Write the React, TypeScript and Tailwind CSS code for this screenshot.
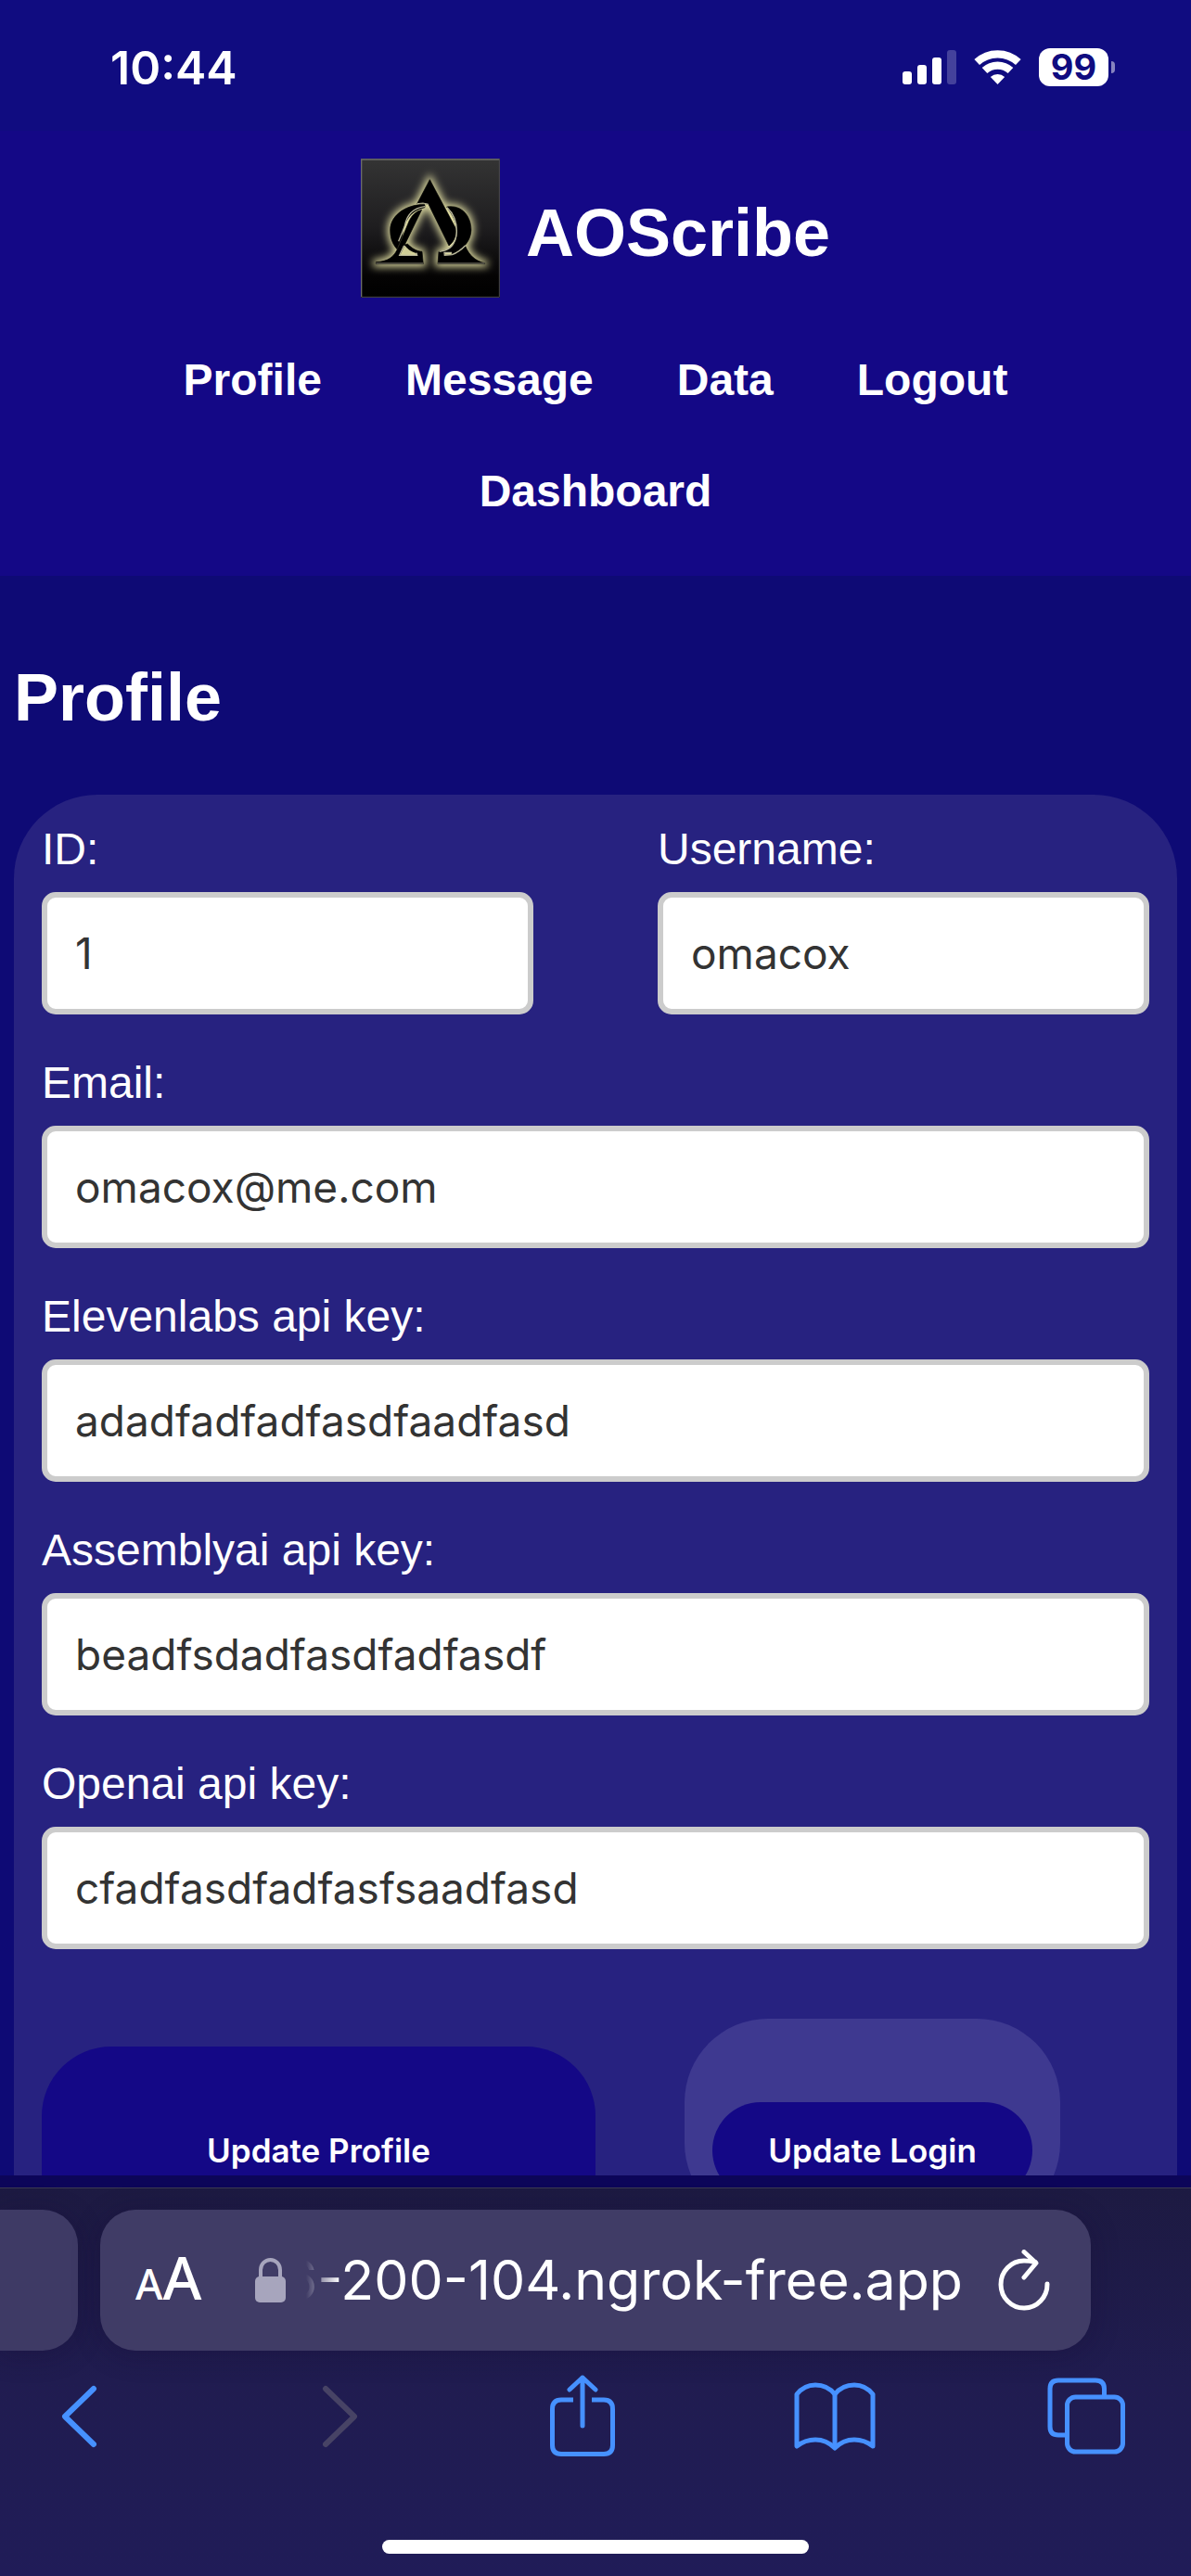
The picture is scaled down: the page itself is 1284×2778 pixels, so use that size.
import React from "react";

const navItems = ["Profile", "Message", "Data", "Logout", "Dashboard"];

function StatusBar() {
  return (
    <div className="flex h-[141px] shrink-0 items-start justify-between bg-[#100c80] pt-[44px] pr-[82px] pl-[119px] font-['Inter',sans-serif] text-white">
      <span className="text-[50px] leading-[58px] font-semibold">10:44</span>
      <div className="flex items-center gap-[19px] pt-2">
        <svg className="h-[37px] w-[58px]" viewBox="0 0 58 37" fill="currentColor" aria-hidden="true">
          <rect x="0" y="23" width="10" height="14" rx="3" />
          <rect x="16" y="16" width="10" height="21" rx="3" />
          <rect x="32" y="8" width="10" height="29" rx="3" />
          <rect x="48" y="0" width="10" height="37" rx="3" opacity="0.22" />
        </svg>
        <svg className="h-[37px] w-[51px]" viewBox="330 72 154 112" fill="none" stroke="currentColor" strokeWidth="25" aria-hidden="true">
          <path d="M339.5 111.6 A99 99 0 0 1 474.5 111.6" />
          <path d="M364.7 138.7 A62 62 0 0 1 449.3 138.7" />
          <path d="M407 184 L383.8 160 A34 34 0 0 1 430.2 160 Z" fill="currentColor" stroke="none" />
        </svg>
        <div className="flex items-center gap-[3px]">
          <span className="flex h-[41px] w-[75px] items-center justify-center rounded-[12px] bg-white text-[38px] leading-[41px] font-bold text-[#100c80]">
            99
          </span>
          <span className="h-[13px] w-[4px] rounded-r-full bg-[#8784bf]" />
        </div>
      </div>
    </div>
  );
}

function Logo() {
  return (
    <svg className="size-[150px]" viewBox="12 12 450 450" role="img" aria-label="AOScribe logo">
      <defs>
        <linearGradient id="tile" x1="0" y1="0" x2="0" y2="1">
          <stop offset="0" stopColor="#343434" />
          <stop offset="0.5" stopColor="#1e1d1f" />
          <stop offset="0.85" stopColor="#040303" />
          <stop offset="1" stopColor="#000000" />
        </linearGradient>
        <filter id="glow" x="-30%" y="-30%" width="160%" height="160%">
          <feGaussianBlur stdDeviation="12" />
        </filter>
        <g id="mark">
          <path d="M235 80 L319 238 Q324 272 297 294 L231 160 Q214 153 194 158 Z" />
          <path d="M290 168 C340 160 369 200 369 243 C368 278 343 305 318 316 L305 325 L308 317 L282 315 L283 325 L307 324 Q330 316 350 295 C362 325 385 345 413 350 L413 353 L261 353 L264 313 L284 309 C308 304 323 280 323 250 C323 215 306 192 290 168 Z" />
          <path d="M219 161 C168 158 108 190 107 243 C107 275 118 292 129 305 L146 263 C150 215 172 180 219 170 Z" />
          <path d="M209 178 L137 326 L194 326 L192 317 C172 312 160 301 154 291 L163 288 C178 303 192 311 210 313 L214 353 L61 353 L61 347 C100 345 121 330 134 297 L169 212 Q182 185 209 178 Z" />
        </g>
      </defs>
      <rect x="12" y="12" width="450" height="450" fill="url(#tile)" />
      <path d="M14 460 V15 H460" fill="none" stroke="#6b6b6b" strokeWidth="4" />
      <path d="M14 460 H460 V15" fill="none" stroke="#4a4a4c" strokeWidth="3" />
      <use href="#mark" filter="url(#glow)" fill="#dedba0" stroke="#dedba0" strokeWidth="18" />
      <use href="#mark" fill="#000000" stroke="#000000" strokeWidth="2" />
      <path d="M219 167 C182 172 160 196 154 230 L134 280" fill="none" stroke="#b9b79a" strokeWidth="4" />
      <path d="M291 170 C312 190 323 215 322 250 C321 280 306 303 284 309 L266 313" fill="none" stroke="#b9b79a" strokeWidth="4" />
      <path d="M350 293 Q330 314 307 323 L283 325 L282 316 L306 316" fill="none" stroke="#b9b79a" strokeWidth="4" />
      <path d="M194 158 Q214 153 231 160" fill="none" stroke="#b9b79a" strokeWidth="3" />
      <path d="M152 293 L137 325 H194 L192 317" fill="none" stroke="#b9b79a" strokeWidth="4" />
      <path d="M61 351 H214 M261 351 H413" fill="none" stroke="#8d8b78" strokeWidth="3" />
    </svg>
  );
}

function Header() {
  return (
    <header className="shrink-0 bg-[#140886] px-[30px] pt-[30px] pb-[31px]">
      <div className="flex items-end justify-center gap-[28px]">
        <Logo />
        <h1 className="text-[72px] leading-[140px] font-bold">AOScribe</h1>
      </div>
      <nav className="mt-[29px] flex flex-wrap justify-center">
        {navItems.map((item) => (
          <a key={item} href="#" className="px-[45px] text-[48px] leading-[120px] font-bold">
            {item}
          </a>
        ))}
      </nav>
    </header>
  );
}

function Field({ id, label, value, wide }: { id: string; label: string; value: string; wide?: boolean }) {
  return (
    <div className={wide ? "col-span-2" : ""}>
      <label htmlFor={id} className="mb-[18px] block text-[48px] leading-[57px]">
        {label}
      </label>
      <input
        id={id}
        type="text"
        defaultValue={value}
        className="block h-[132px] w-full rounded-[15px] border-6 border-[#cccccc] bg-white px-[30px] font-['Inter',sans-serif] text-[46px] text-[#333333]"
      />
    </div>
  );
}

function ProfileForm() {
  return (
    <form className="rounded-[90px] bg-[#272280] p-[30px]" onSubmit={(e) => e.preventDefault()}>
      <div className="grid grid-cols-2 gap-x-[134px] gap-y-[45px]">
        <Field id="user-id" label="ID:" value="1" />
        <Field id="username" label="Username:" value="omacox" />
        <Field id="email" label="Email:" value="omacox@me.com" wide />
        <Field id="elevenlabs" label="Elevenlabs api key:" value="adadfadfadfasdfaadfasd" wide />
        <Field id="assemblyai" label="Assemblyai api key:" value="beadfsdadfasdfadfasdf" wide />
        <Field id="openai" label="Openai api key:" value="cfadfasdfadfasfsaadfasd" wide />
      </div>
      <div className="mt-[75px] grid grid-cols-2 items-end font-['Inter',sans-serif] text-[35px] font-semibold">
        <button type="submit" className="h-[224px] rounded-[75px] bg-[#140886]">
          Update Profile
        </button>
        <div className="mb-[30px] justify-self-center rounded-[90px] bg-[#3e3990] px-[30px] pt-[90px] pb-[30px]">
          <button type="button" className="block h-[104px] rounded-full bg-[#140886] px-[60px]">
            Update Login
          </button>
        </div>
      </div>
    </form>
  );
}

function AddressBar() {
  return (
    <div className="flex h-[152px] gap-[24px]">
      <div className="w-[84px] shrink-0 rounded-r-[38px] bg-[#3e3a65] shadow-[0_4px_30px_rgba(20,10,50,0.3)]" />
      <div className="mr-[108px] flex min-w-0 flex-1 items-center rounded-[38px] bg-[#403c66] pr-[44px] pl-[38px] font-['Inter',sans-serif] text-white shadow-[0_4px_30px_rgba(20,10,50,0.3)]">
        <button type="button" aria-label="Page settings" className="flex items-baseline font-['Noto_Sans',sans-serif] leading-[80px] font-medium">
          <span className="text-[45px]">A</span>
          <span className="text-[64px]">A</span>
        </button>
        <svg className="ml-auto h-[48px] w-[33px] shrink-0" viewBox="0 0 33 48" fill="none" aria-hidden="true">
          <rect x="0" y="20" width="33" height="28" rx="5" fill="#a7a5bd" />
          <path d="M6 22 V13 A10.5 11 0 0 1 27 13 V22" stroke="#a7a5bd" strokeWidth="4" />
        </svg>
        <div className="ml-[22px] flex w-[708px] justify-end overflow-hidden text-[59px] leading-[80px] whitespace-nowrap [mask-image:linear-gradient(to_right,transparent,black_36px)]">
          6-200-104.ngrok-free.app
        </div>
        <button type="button" aria-label="Reload" className="ml-[38px] shrink-0">
          <svg className="h-[67px] w-[56px]" viewBox="0 0 56 67" fill="none" stroke="currentColor" strokeWidth="5" strokeLinecap="round" strokeLinejoin="round">
            <path d="M53 37 A25 25.5 0 1 1 28 12 Q34 12 40 13.5" />
            <path d="M28 2.5 L41 14.5 L28 30" />
          </svg>
        </button>
      </div>
    </div>
  );
}

function Toolbar() {
  return (
    <div className="mt-[25px] flex h-[91px] items-center justify-between pr-[69px] pl-[41px] text-[#4691ff]">
      <button type="button" aria-label="Back" className="flex w-[88px] justify-center">
        <svg className="h-[68px] w-[40px]" viewBox="0 0 40 68" fill="none" stroke="currentColor" strokeWidth="6" strokeLinecap="round" strokeLinejoin="round">
          <path d="M36 4 L5 34 L36 64" />
        </svg>
      </button>
      <button type="button" aria-label="Forward" disabled className="flex w-[88px] justify-center pl-[20px] text-[#474365]">
        <svg className="h-[68px] w-[40px]" viewBox="0 0 40 68" fill="none" stroke="currentColor" strokeWidth="6" strokeLinecap="round" strokeLinejoin="round">
          <path d="M4 4 L35 34 L4 64" />
        </svg>
      </button>
      <button type="button" aria-label="Share" className="flex w-[88px] justify-center">
        <svg className="h-[90px] w-[70px]" viewBox="0 0 70 90" fill="none" stroke="currentColor" strokeWidth="5">
          <path d="M25 27 H12 Q2.5 27 2.5 37 V76 Q2.5 85.5 12 85.5 H58 Q67.5 85.5 67.5 76 V37 Q67.5 27 58 27 H45" />
          <path d="M35 55 V3 M21 16 L35 3 L49 16" strokeLinecap="round" strokeLinejoin="round" />
        </svg>
      </button>
      <button type="button" aria-label="Bookmarks" className="flex w-[88px] justify-center">
        <svg className="h-[74px] w-[88px]" viewBox="0 0 88 74" fill="none" stroke="currentColor" strokeWidth="5" strokeLinejoin="round">
          <path d="M3 13 Q11 3 23 3 Q36 3 44 13 Q52 3 65 3 Q77 3 85 13 V69 Q76 62 65 62 Q53 62 44 71 Q35 62 23 62 Q12 62 3 69 Z" />
          <path d="M44 12 V70" />
        </svg>
      </button>
      <button type="button" aria-label="Tabs" className="flex w-[88px] justify-center">
        <svg className="h-[83px] w-[84px]" viewBox="0 0 84 83" fill="none" stroke="currentColor" strokeWidth="5">
          <rect x="21.5" y="21" width="60" height="59" rx="9" />
          <path d="M61.5 20 V12 Q61.5 3 52 3 H12 Q3 3 3 12 V53 Q3 62 12 62 H21" />
        </svg>
      </button>
    </div>
  );
}

export default function App() {
  return (
    <div className="flex h-screen flex-col overflow-hidden bg-[#0e0a75] font-['Liberation_Sans',Arial,sans-serif] text-white">
      <StatusBar />
      <Header />
      <main className="min-h-0 flex-1 overflow-hidden px-[15px] pt-[90px]">
        <h2 className="mb-[64px] text-[72px] leading-[82px] font-bold">Profile</h2>
        <ProfileForm />
      </main>
      <footer className="shrink-0">
        <div className="h-[13px] bg-[#0c0559]" />
        <div className="border-t border-[#3c3a52] bg-linear-to-b from-[#1d1a42] via-[#201c50] to-[#201c58] pt-[23px] pb-[24px]">
          <AddressBar />
          <Toolbar />
          <div className="mx-auto mt-[88px] h-[15px] w-[460px] rounded-full bg-white" />
        </div>
      </footer>
    </div>
  );
}
